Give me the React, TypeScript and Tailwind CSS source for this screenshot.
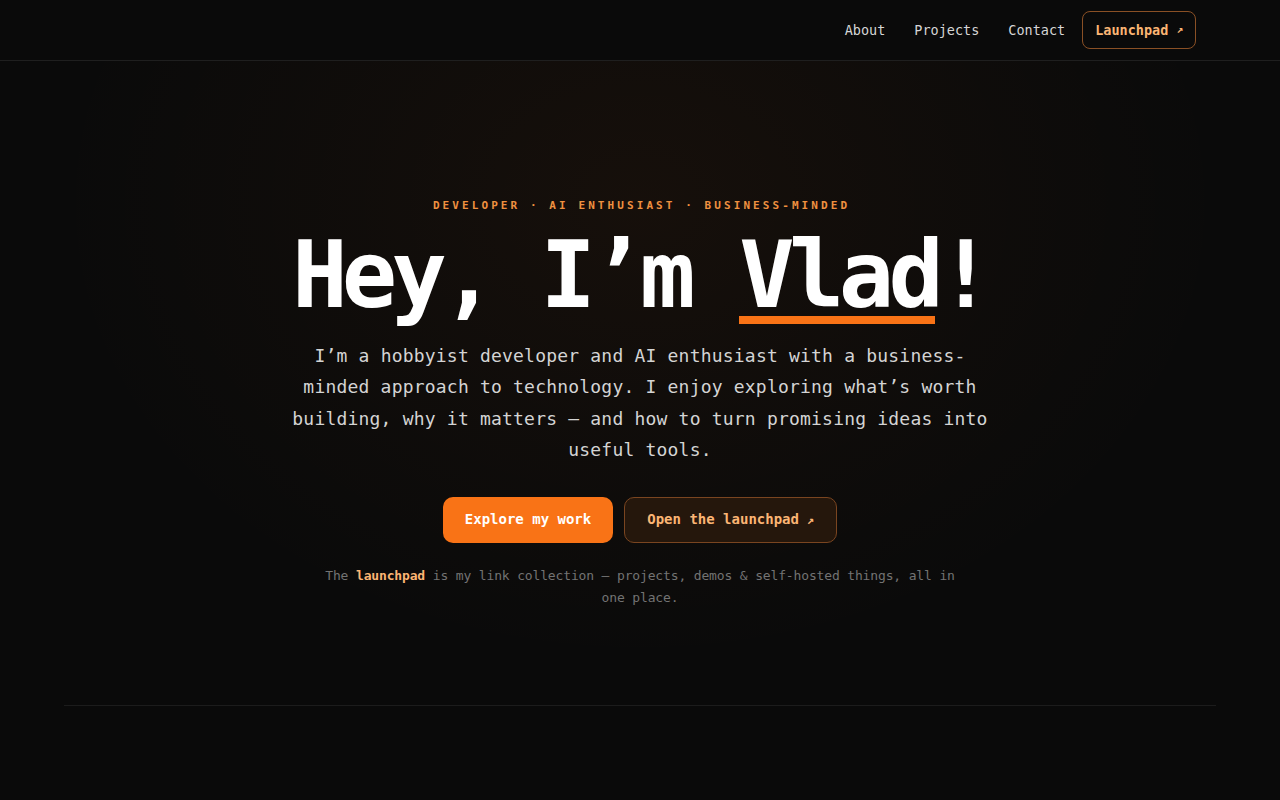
import React from "react";

const mono = { fontFamily: '"DejaVu Sans Mono", "Liberation Mono", monospace' };

export default function App() {
  return (
    <div className="min-h-screen bg-[#0a0a0a] text-white" style={mono}>
      <header className="h-[61px] border-b border-[#1f1f1f]">
        <div className="max-w-6xl mx-auto px-5 h-full flex items-center justify-end gap-[5px]">
          <a className="px-3 py-2 text-[13.5px] text-[#d6d6d6]">About</a>
          <a className="px-3 py-2 text-[13.5px] text-[#d6d6d6]">Projects</a>
          <a className="px-3 py-2 text-[13.5px] text-[#d6d6d6]">Contact</a>
          <a className="h-[38px] px-3 flex items-center rounded-lg border border-[#8a5025] text-[13.5px] font-bold text-[#fbb574]">
            Launchpad<span className="ml-2 text-[11px]">↗</span>
          </a>
        </div>
      </header>

      <section className="bg-[radial-gradient(ellipse_46%_72%_at_50%_22%,rgba(249,115,22,0.05),rgba(249,115,22,0.02)_60%,transparent_100%)]">
        <div className="flex flex-col items-center text-center pt-[137px]">
          <p className="text-[11px] leading-4 font-bold tracking-[0.28em] text-[#ef9140] pl-[0.28em]">
            DEVELOPER · AI ENTHUSIAST · BUSINESS-MINDED
          </p>
          <h1 className="mt-[16px] text-[92px] leading-none font-bold tracking-[-0.062em] text-white">
            Hey, I’m{" "}
            <span className="relative inline-block">
              Vlad
              <span className="absolute left-0 right-[3px] bottom-[-2px] h-2 bg-[#f97316]"></span>
            </span>
            !
          </h1>
          <p className="mt-[18px] max-w-[706px] text-[18px] leading-[31.4px] tracking-[0.2px] text-[#d4d4d4]">
            I’m a hobbyist developer and AI enthusiast with a business-minded approach to technology. I enjoy exploring what’s worth building, why it matters — and how to turn promising ideas into useful tools.
          </p>
          <div className="mt-[31px] flex gap-[11px]">
            <a className="h-[46px] px-[22px] flex items-center rounded-[10px] bg-[#f97316] text-[14px] font-bold text-white">
              Explore my work
            </a>
            <a className="h-[46px] px-[22px] flex items-center rounded-[10px] border border-[#7a4520] bg-[#25170c] text-[14px] font-bold text-[#fbb574]">
              Open the launchpad<span className="ml-2 text-[12px]">↗</span>
            </a>
          </div>
          <p className="mt-[22px] max-w-[640px] text-[13px] leading-[22px] text-[#737373] tracking-[-0.15px]">
            The <span className="font-bold text-[#fbb574]">launchpad</span> is my link collection — projects, demos &amp; self-hosted things, all in one place.
          </p>
        </div>
        <div className="h-[96px]"></div>
      </section>
      <div className="max-w-6xl mx-auto border-t border-[#1c1c1c]"></div>
      <div className="h-[95px]"></div>
    </div>
  );
}
